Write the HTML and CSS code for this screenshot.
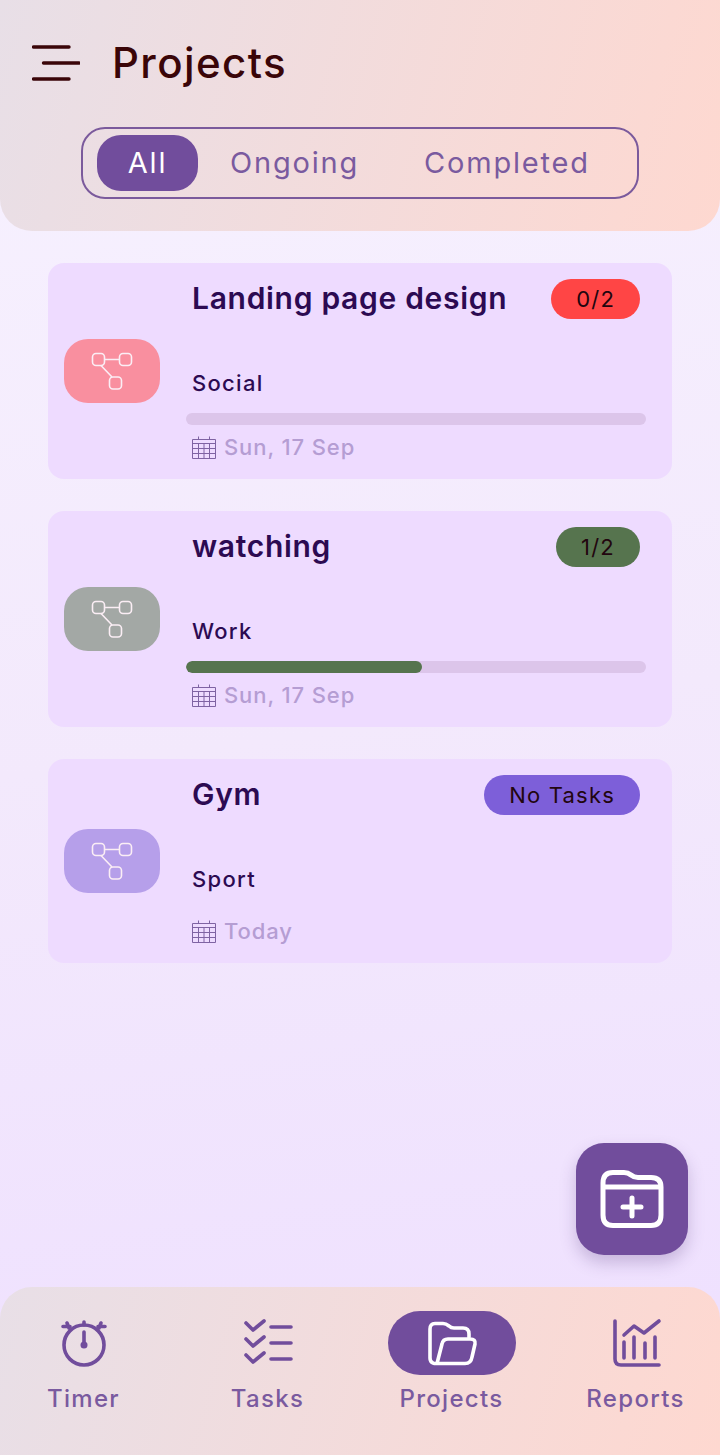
FILE: index.html
```html
<!DOCTYPE html>
<html lang="en">
<head>
  <meta charset="UTF-8" />
  <meta name="viewport" content="width=device-width, initial-scale=1.0" />
  <title>Projects</title>
  <link rel="stylesheet" href="styles.css">
</head>
<body>
  <div class="page">
    <header class="top">
      <div class="top-row">
        <svg class="menu-icon" width="48" height="48" viewBox="0 0 48 48">
          <path d="M1.5 8H37M11.5 24H47M1.5 40H37" />
        </svg>
        <h1 class="page-title">Projects</h1>
      </div>
      <div class="filter">
        <span class="tab tab-active">All</span>
        <span class="tab">Ongoing</span>
        <span class="tab">Completed</span>
      </div>
    </header>

    <main class="list">
      <section class="card">
        <div class="card-icon icon-pink">
          <svg width="48" height="48" viewBox="0 0 48 48"><use href="#nodes" /></svg>
        </div>
        <div class="card-body">
          <div class="card-head">
            <h2 class="card-title">Landing page design</h2>
            <span class="badge badge-red">0/2</span>
          </div>
          <p class="card-sub">Social</p>
          <div class="track"></div>
          <p class="card-date">
            <svg width="24" height="24" viewBox="0 0 24 24"><use href="#calendar" /></svg>
            Sun, 17 Sep
          </p>
        </div>
      </section>

      <section class="card">
        <div class="card-icon icon-gray">
          <svg width="48" height="48" viewBox="0 0 48 48"><use href="#nodes" /></svg>
        </div>
        <div class="card-body">
          <div class="card-head">
            <h2 class="card-title">watching</h2>
            <span class="badge badge-green">1/2</span>
          </div>
          <p class="card-sub">Work</p>
          <div class="track"><div class="track-fill" style="width: 51.3%"></div></div>
          <p class="card-date">
            <svg width="24" height="24" viewBox="0 0 24 24"><use href="#calendar" /></svg>
            Sun, 17 Sep
          </p>
        </div>
      </section>

      <section class="card">
        <div class="card-icon icon-purple">
          <svg width="48" height="48" viewBox="0 0 48 48"><use href="#nodes" /></svg>
        </div>
        <div class="card-body">
          <div class="card-head">
            <h2 class="card-title">Gym</h2>
            <span class="badge badge-purple">No Tasks</span>
          </div>
          <p class="card-sub">Sport</p>
          <p class="card-date card-date-tight">
            <svg width="24" height="24" viewBox="0 0 24 24"><use href="#calendar" /></svg>
            Today
          </p>
        </div>
      </section>
    </main>

    <button class="fab">
      <svg width="64" height="64" viewBox="0 0 64 64">
        <path d="M3 16Q3 5.5 13 5.5H24Q28 5.5 31 8Q34 10.5 38 10.5H51Q61 10.5 61 20V48Q61 58.5 51 58.5H13Q3 58.5 3 48ZM3 20H61M32 31V49M23 40H41" />
      </svg>
    </button>

    <nav class="nav">
      <div class="nav-item">
        <div class="nav-icon">
          <svg width="48" height="48" viewBox="0 0 48 48">
            <circle cx="24" cy="26" r="20" />
            <path d="M24 13V26M24 3V6M3 7.5H10M7 4L9 9M38 7.5H45M41 4L39 9" />
            <circle class="dot" cx="24" cy="26" r="3.5" />
          </svg>
        </div>
        <span class="nav-label">Timer</span>
      </div>
      <div class="nav-item">
        <div class="nav-icon">
          <svg width="48" height="48" viewBox="0 0 48 48">
            <path d="M2 4L9 11L20 2M2 20L9 27L20 18M2 36L9 43L20 34M27 8H47M27 24H47M27 40H47" />
          </svg>
        </div>
        <span class="nav-label">Tasks</span>
      </div>
      <div class="nav-item">
        <div class="nav-icon nav-icon-active">
          <svg width="48" height="48" viewBox="0 0 48 48">
            <path d="M5 44Q2 43 2 39V10Q2 4.5 7 4.5H15Q18 4.5 21 7Q23 9 26 9H35Q41 9 41 15V18M9 44.5L14 25Q15 20 20 20H42Q48 20 47 25L44 38Q43 44.5 37 44.5H6" />
          </svg>
        </div>
        <span class="nav-label">Projects</span>
      </div>
      <div class="nav-item">
        <div class="nav-icon">
          <svg width="48" height="48" viewBox="0 0 48 48">
            <path d="M3 2V40Q3 46 9 46H47M12 16L22 7L32 14L47 2M12 23V39M22 18V39M33 24V39M43 18V39" />
          </svg>
        </div>
        <span class="nav-label">Reports</span>
      </div>
    </nav>
  </div>

  <svg class="defs" width="0" height="0">
    <defs>
      <g id="nodes" class="nodes">
        <rect x="4.5" y="6.5" width="12" height="12" rx="3.5" />
        <rect x="31.5" y="6.5" width="12" height="12" rx="3.5" />
        <rect x="21.5" y="30" width="12" height="12" rx="3.5" />
        <path d="M16.5 12.5H31.5M13 18.5L24 30" />
      </g>
      <g id="calendar" class="calendar">
        <path d="M.5 4.5H23.5V23.5H.5ZM.5 8.5H23.5M.5 13.5H23.5M.5 18.5H23.5M6.5 8.5V23.5M12 8.5V23.5M17.5 8.5V23.5M6.5 1.5V4.5M17.5 1.5V4.5" />
      </g>
    </defs>
  </svg>
</body>
</html>
```

FILE: styles.css
```css
* {
  box-sizing: border-box;
}
body {
  margin: 0;
  font-family: Inter, "Noto Sans", sans-serif;
}
h1, h2, p {
  margin: 0;
}
.page {
  position: relative;
  display: flex;
  flex-direction: column;
  width: 720px;
  height: 1455px;
  overflow: hidden;
  background: linear-gradient(172deg, #f7f2ff 0%, #f3e9fc 50%, #eedfff 100%);
}
.defs {
  position: absolute;
}

/* header */
.top {
  padding: 39px 0 32px;
  background: linear-gradient(105deg, #e8dfe7 0%, #fed8d0 100%);
  border-radius: 0 0 32px 32px;
}
.top-row {
  display: flex;
  align-items: center;
  gap: 32px;
  padding-left: 32px;
}
.menu-icon path {
  fill: none;
  stroke: #3a0508;
  stroke-width: 3.4;
  stroke-linecap: round;
}
.page-title {
  font-size: 42px;
  line-height: 48px;
  font-weight: 500;
  letter-spacing: 1.4px;
  color: #3a0508;
}
.filter {
  display: flex;
  align-items: center;
  width: 558px;
  height: 72px;
  margin: 40px auto 0;
  padding: 0 14px;
  border: 2px solid #7b5a9c;
  border-radius: 24px;
}
.tab {
  padding: 0 33px 0 32px;
  font-size: 29px;
  line-height: 56px;
  letter-spacing: 1.8px;
  color: #7a5a9f;
}
.tab-active {
  flex: none;
  width: 101px;
  padding: 0;
  text-align: center;
  color: #fff;
  background: #714d9c;
  border-radius: 24px;
}

/* project cards */
.list {
  flex: 1;
  display: flex;
  flex-direction: column;
  gap: 32px;
  padding: 32px 48px 0;
}
.card {
  display: flex;
  align-items: center;
  padding: 16px 26px 20px 16px;
  background: #eedbff;
  border-radius: 16px;
}
.card-icon {
  display: flex;
  align-items: center;
  justify-content: center;
  flex: none;
  width: 96px;
  height: 64px;
  margin: 4px 26px 0 0;
  border-radius: 24px;
}
.icon-pink {
  background: #f98f9f;
}
.icon-gray {
  background: #a3a8a5;
}
.icon-purple {
  background: #b69fea;
}
.nodes {
  fill: none;
  stroke: #fbeef5;
  stroke-width: 1.6;
}
.card-body {
  flex: 1;
  min-width: 0;
}
.card-head {
  display: flex;
  align-items: center;
  justify-content: space-between;
  padding: 0 6px;
}
.card-title {
  padding-bottom: 2px;
  font-size: 30px;
  line-height: 38px;
  font-weight: 600;
  letter-spacing: 0.7px;
  color: #2c0a52;
}
.badge {
  padding: 0 25px;
  font-size: 22px;
  line-height: 40px;
  letter-spacing: 1.2px;
  color: #22060f;
  border-radius: 20px;
}
.badge-red {
  background: #ff4545;
}
.badge-green {
  background: #56744e;
}
.badge-purple {
  background: #7d5fd9;
}
.card-sub {
  margin-top: 52px;
  padding: 0 6px;
  font-size: 22px;
  line-height: 24px;
  font-weight: 500;
  letter-spacing: 1.3px;
  color: #2c0a52;
}
.track {
  height: 12px;
  margin-top: 18px;
  background: #dcc5ea;
  border-radius: 6px;
  overflow: hidden;
}
.track-fill {
  height: 100%;
  background: #56744e;
  border-radius: 6px;
}
.card-date {
  display: flex;
  align-items: center;
  gap: 8px;
  margin-top: 10px;
  padding: 0 6px;
  font-size: 22px;
  line-height: 24px;
  font-weight: 500;
  letter-spacing: 0.9px;
  color: #b59dd3;
}
.card-date-tight {
  margin-top: 28px;
}
.calendar {
  fill: none;
  stroke: #7f63a3;
  stroke-width: 1;
}

/* floating button */
.fab {
  position: absolute;
  left: 576px;
  top: 1143px;
  display: flex;
  align-items: center;
  justify-content: center;
  width: 112px;
  height: 112px;
  padding: 0;
  border: none;
  border-radius: 28px;
  background: #714d9c;
  box-shadow: 0 8px 16px rgba(80, 50, 120, 0.25);
}
.fab path {
  fill: none;
  stroke: #fff;
  stroke-width: 5;
  stroke-linecap: round;
  stroke-linejoin: round;
}

/* bottom nav */
.nav {
  display: grid;
  grid-template-columns: repeat(4, 128px);
  gap: 56px;
  height: 168px;
  padding: 24px 0 0 20px;
  background: linear-gradient(105deg, #e8dfe7 0%, #fed8d0 100%);
  border-radius: 32px 32px 0 0;
}
.nav-item {
  display: flex;
  flex-direction: column;
  align-items: center;
}
.nav-icon {
  display: flex;
  align-items: center;
  justify-content: center;
  width: 128px;
  height: 64px;
  border-radius: 32px;
}
.nav-icon svg {
  overflow: visible;
}
.nav-icon path, .nav-icon circle {
  fill: none;
  stroke: #714d9c;
  stroke-width: 3.6;
  stroke-linecap: round;
  stroke-linejoin: round;
}
.nav-icon .dot {
  fill: #714d9c;
  stroke: none;
}
.nav-icon-active {
  background: #714d9c;
}
.nav-icon-active path {
  stroke: #fff;
}
.nav-label {
  margin: 8px 1px 0 0;
  font-size: 24px;
  line-height: 32px;
  font-weight: 500;
  letter-spacing: 1.3px;
  color: #7a5a9f;
}
```
